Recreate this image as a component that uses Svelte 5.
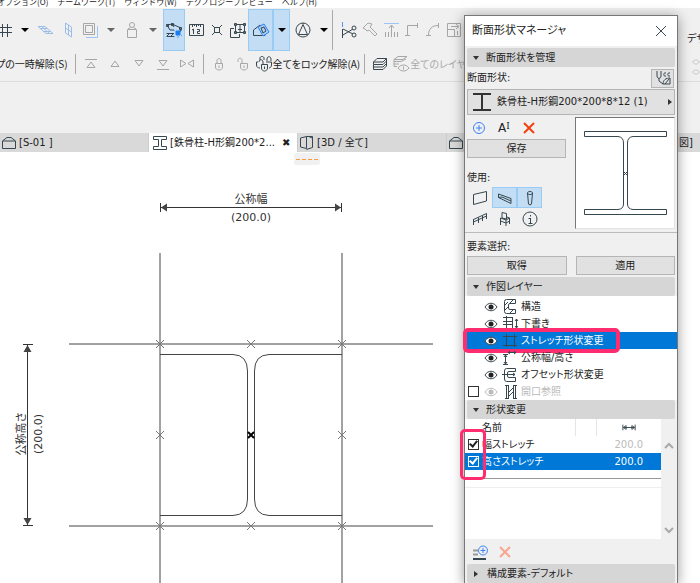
<script lang="ts">
  const menus = ['オプション(O)', 'チームワーク(T)', 'ウィンドウ(W)', 'テクノロジープレビュー', 'ヘルプ(H)'];

  // all toolbar glyphs are drawn on an 18x18 grid
  const icons: Record<string, string> = {
    grid: 'M5.5 3V16M10.5 3V16M0 6.5H15M0 11.5H15',
    slab: 'M1 5.5H8L16 12.5H9ZM4.5 5.5L12.5 12.5M3 7.5H10.500M6 10.500H13',
    wall: 'M6.500 2L12.500 6V16L6.500 12ZM6.500 7L12.500 11M9.500 4V14',
    box: 'M2.5 2.5H13.5V13.5H2.5ZM4.500 4.500H11.500V11.500H4.500Z',
    weight: 'M4.500 8.500H13.500V16.500H4.500ZM5 8L7.5 6.5M13 8L10.5 6.5M9 1.5A2.5 2.5 0 1 1 9 6.5A2.5 2.5 0 1 1 9 1.5',
    ruler: 'M2.500 3.500H16.500V14.500H2.500ZM5.500 3V6M7.5 3V5M9.500 3V6M11.500 3V5M13.500 3V6M6.500 8V13M5 9L6.500 8M10 8.5H12.500V10.5H10.500V12.500H13',
    cross: 'M4 4L7 7M11 11L14 14M14 4L11 7M7 11L4 14M6.500 6.500H11.500V11.500H6.500Z',
    nodes: 'M5 7.500H1.500V16.500H10.500V13M6.500 3.500H15.500V11.500H6.500ZM5.500 2.500H7.500V4.500H5.500ZM14.500 2.500H16.500V4.500H14.500ZM5.500 10.500H7.500V12.500H5.500ZM14.500 10.500H16.500V12.500H14.500ZM11 4V11M9 8.500H13',
    compass: 'M9 2A7 7 0 1 1 9 16A7 7 0 1 1 9 2M9 3.500L13.500 13.500H4.500ZM9 3V2',
    hammer: 'M2 7L7 2L11 3L9 6L16 13L14 15L8 9L6 10L4 8Z',
    raise: 'M9.500 16V5M7 7L9.500 4L12 7M3.500 16V11M6.500 16V11M12.500 16V11M15.500 16V11',
    corner: 'M4.500 15V4.500H14M2 14.500H7M14.500 2V7',
    arc: 'M4.500 14C4.500 8 8 4.500 14 4.500M2 14.500H7M14.500 2V7',
    resize: 'M2.5 2.5H15.5V15.5H2.5ZM3 8.500H9.500V15M6 5.500H13M11 3L14 5.500L11 8M12.500 10V14',
    toTop: 'M3 4.500H15M5 12.500L9 7L13 12.500Z',
    up: 'M5 11.500L9 6L13 11.500Z',
    down: 'M5 5.500L9 11L13 5.500Z',
    toBottom: 'M5 5.500L9 11L13 5.500ZM3 14.500H15',
    mirror: 'M2.500 5V12L8 8.500ZM15.500 5V12L10 8.500Z',
    lock: 'M5.500 8.500H12.500V12C12.500 16 5.500 16 5.500 12ZM7 8V5.500C7 3 11 3 11 5.500V8M9 10.500V13',
    unlock: 'M6.500 8.500H13.500V12C13.500 16 6.500 16 6.500 12ZM8 8V5.500C8 2.500 4 2.500 4 5.500V7M10 10.500V13',
    unlockAll: 'M6.500 9.500H12.500V13C12.500 17 6.500 17 6.500 13ZM8 9V7C8 4 4 4 4 7M3 7H1.500V10C1.500 12 3 13 5 13M5 5V3C5 1 9 1 9 3V5M11 7H16.500V10C16.500 12 15 13 14 13M12 6V4C12 1 16 1 16 4V6M9.500 11.500V14',
    layers: 'M6 3.500H15.500L12 7H2.500ZM2.500 7V9.500H12L15.500 6M2.500 9.500V12H12L15.500 8.500M2.500 12V14.500H12L15.500 11V3.500',
    layersEye: 'M6 1.500H15L11 4.500H2ZM2 4.500V6.500H9L14 4M2 6.500V9H7M2 9V11.500H5M6 13C9 9 14 9 17 13C14 17 9 17 6 13ZM11.500 11.500V14.500',
    building: 'M2.500 7V14.500H15.500V7ZM2.500 7L7 3.500H11L15.500 7',
    profile: 'M2.500 2.500H15.500V5.500H10.500V12.500H15.500V15.500H2.500V12.500H7.500V5.500H2.500Z',
    view3d: 'M2.500 4L8.500 2.500V14.500L2.500 13ZM8.500 2.500H14.500V13.500L8.500 15.500M11 2.500L14 4',
    wallUse: 'M2.500 5.500L15.500 2.500V12L2.500 15.500Z',
    beamUse: 'M2.500 5V8.500L15 14.500V9.500ZM2.500 8.500L6 8L15 12',
    columnUse: 'M6.500 4C6.500 2 11.500 2 11.500 4L10.500 15C10.500 16 7.500 16 7.500 15ZM6.500 4C6.500 6 11.500 6 11.500 4',
    railing: 'M2.500 9.500L15.500 3.500M2.500 12L15.500 6M2.500 9V15M7.500 7.500V13M11.500 6V11M15.500 3.500V9',
    object: 'M6 2.500L10.500 3.500V9L6 8ZM4.500 8L10 10L13.500 8L11 7M4.500 8V11L10 13L13.500 11V8M10 10V16M4.500 11V15M13.500 11V14',
    info: 'M9 2A7 7 0 1 1 9 16A7 7 0 1 1 9 2M9.500 8V13M7.500 8.500H9M7.500 13.500H11.500M9.500 5V6.500',
    eye: 'M3 9C6 4 12 4 15 9C12 14 6 14 3 9Z',
    structure: 'M3.500 3.500Q3.500 1.500 5.500 1.500H14.500V5.500H9Q7.500 5.500 7.500 7V10Q7.500 11.500 9 11.500H14.500V15.500H5.500Q3.500 15.500 3.500 13.500ZM4 7L7 4M4 12L7 9M9 5L12 2M9 15L12 12',
    draft: 'M5.500 1V16M2 2.500H12M2 6.500H12M2 9.500H12M2 13.500H12M15.500 4V13M14 6L15.500 4L17 6M14 11L15.500 13L17 11M11.500 2V14',
    stretch: 'M5.500 2V15M13.500 2V15M2 4.500H16M2 13.500H16',
    nominal: 'M4.500 6V15M3 8L4.500 6L6 8M3 13L4.500 15L6 13M2 5.500H7M2 15.500H7M7 3.500H15M9 2L7 3.500L9 5M13 2L15 3.500L13 5',
    offset: 'M5.500 2.500H14.500V5.500H8Q6.500 5.500 6.500 7V10Q6.500 11.500 8 11.500H14.500V15.500H5.500Q3.500 15.500 3.500 13V5Q3.500 2.500 5.500 2.500M1 8.500H14M12 7L14 8.500L12 10',
    opening: 'M5.500 2V16M7.500 2V16M12.500 2V16M14.500 2V16M8 9L12 5M8 13L12 9M4 2.500H8M12 2.500H16M4 15.500H8M12 15.500H16',
    add: 'M9 3.500A5.500 5.500 0 1 1 9 14.500A5.500 5.500 0 1 1 9 3.500M9 6V12M6 9H12',
    close: 'M4 4L14 14M14 4L4 14',
    width: 'M2.500 6V12M15.500 6V12M3 9H15M6 7L3 9L6 11ZM12 7L15 9L12 11Z',
    scrollUp: 'M5 11L9 7L13 11',
    scrollDown: 'M5 7L9 11L13 7'
  };

  const orderTools = ['toTop', 'up', 'down', 'toBottom', 'mirror'];
  const editTools = ['corner', 'arc', 'resize'];

  const layers = [
    { name: '構造', icon: 'structure' },
    { name: '下書き', icon: 'draft' },
    { name: 'ストレッチ形状変更', icon: 'stretch' },
    { name: '公称幅/高さ', icon: 'nominal' },
    { name: 'オフセット形状変更', icon: 'offset' },
    { name: '開口参照', icon: 'opening', off: true }
  ];

  let selectedLayer = $state(2);
  let selectedRow = $state(1);
  let modifiers = $state([
    { name: '幅ストレッチ', value: '200.0', checked: true },
    { name: '高さストレッチ', value: '200.0', checked: true }
  ]);

  const nodes = [
    [160, 192], [251, 192], [342, 192],
    [160, 283], [342, 283],
    [160, 374], [251, 374], [342, 374]
  ];
</script>

{#snippet icon(name: string)}
  <svg class="icon" viewBox="0 0 18 18" aria-hidden="true"><path d={icons[name]} /></svg>
{/snippet}

{#snippet tool(name: string, cls = '')}
  <button class="tool {cls}" aria-label={name}>{@render icon(name)}</button>
{/snippet}

{#snippet caret(cls = '')}
  <button class="caret {cls}" aria-label="menu"><i></i></button>
{/snippet}

{#snippet section(title: string, open = true)}
  <button class="section" aria-expanded={open}><i class:open></i>{title}</button>
{/snippet}

<div class="app">
  <nav class="menubar">
    {#each menus as m}
      <button>{m}</button>
    {/each}
  </nav>

  <header class="toolbars">
    <div class="bar main">
      {@render tool('grid', 'first')}
      {@render caret()}
      {@render tool('slab', 'wide blue')}
      {@render tool('wall', 'wide blue')}
      <button class="tool wide dim" aria-label="box">
        <svg class="icon" viewBox="0 0 18 18">
          <path d="M16.500 5V16.500H5" stroke="#9dc3f7" />
          <path d={icons.box} />
        </svg>
      </button>
      {@render caret('dim')}
      {@render tool('weight', 'wide dim')}
      {@render caret('dim')}
      <button class="tool wide active" aria-label="trace">
        <svg class="icon" viewBox="0 0 18 18">
          <path d="M2 4L7 3L16 7M2 4L5 9H9M7 3L9 6M16 7L15 11M1.500 12.500H9M1.500 15.500H9M2 15L5 12M6 15L9 12M1.500 3.500H3.500V5.500H1.500ZM6.500 2.500H8.500V4.500H6.500ZM14.500 6.500H16.500V8.500H14.500Z" />
          <path d="M11 10H15V14H11Z" fill="#1c7cf2" stroke="#1c7cf2" />
          <path d="M9 9L10 10M17 9L16 10M17 15L16 14M9 16L10 15M13 17V15" stroke="#5aa2f8" />
        </svg>
      </button>
      {@render tool('ruler')}
      {@render tool('cross')}
      {@render tool('nodes')}
      <button class="tool shape active" aria-label="plane">
        <svg class="icon" viewBox="0 0 18 18">
          <path d="M1.500 14.500V9L8 4L13 9V14.500Z" />
          <path d="M6 6L12 3L17 11L11 15Z" stroke="#2f80ed" fill="#a9cffa" />
          <path d="M9 7L12 6L14 10L11 12Z" />
        </svg>
      </button>
      {@render caret('active')}
      {@render tool('compass', 'round')}
      {@render caret()}
      <span class="rule"></span>
      <button class="tool" aria-label="cut">
        <svg class="icon" viewBox="0 0 18 18">
          <path d="M2.500 1V6" stroke="#4d97f5" />
          <path d="M2.500 8V17M3 8L13 13M3 14L13 8M14 5A2 2 0 1 1 14 9A2 2 0 1 1 14 5M14 12A2 2 0 1 1 14 16A2 2 0 1 1 14 12" />
        </svg>
      </button>
      {@render tool('hammer', 'dim')}
      <button class="tool dim" aria-label="raise">
        <svg class="icon" viewBox="0 0 18 18">
          <path d="M2 2.500H17" stroke="#9dc3f7" />
          <path d={icons.raise} />
        </svg>
      </button>
      {#each editTools as t}
        {@render tool(t, 'dim')}
      {/each}
      <span class="side">デザ</span>
    </div>

    <div class="bar second">
      <button class="text release">プの一時解除(S)</button>
      <span class="rule"></span>
      {#each orderTools as t}
        {@render tool(t, 'dim')}
      {/each}
      <span class="rule"></span>
      {@render tool('lock', 'dim')}
      {@render tool('unlock', 'dim')}
      <button class="text">{@render icon('unlockAll')}全てをロック解除(A)</button>
      <span class="rule"></span>
      {@render tool('layers')}
      <button class="text dim">{@render icon('layersEye')}全てのレイヤー</button>
      <span class="side dim">{@render icon('eye')}{@render icon('eye')}</span>
    </div>
  </header>

  <div class="tabs">
    <button class="tab">{@render icon('building')}[S-01 ]</button>
    <button class="tab current">{@render icon('profile')}[鉄骨柱-H形鋼200*2...<b>✖</b></button>
    <button class="tab">{@render icon('view3d')}[3D / 全て]</button>
    <button class="tab rest">{@render icon('building')}<span>図]</span></button>
  </div>

  <main class="canvas">
    <div class="handle"><i></i></div>
    <svg class="drawing" width="464" height="431" viewBox="0 0 464 431">
      <path class="guides" d="M160 101V431M342 101V431M69 192H433M69 374H433" />
      <path class="outline" d="M160 202.500H233Q247.500 203 247.500 219V347Q247.500 363 233 363.500H160M342 202.500H269Q254.500 203 254.500 219V347Q254.500 363 269 363.500H342" />
      {#each nodes as [x, y]}
        <path class="node" d="M{x - 4} {y - 4}l8 8m0 -8l-8 8" />
      {/each}
      <path class="origin" d="M248 280l6 6m0 -6l-6 6" />
      <path class="dim-line" d="M160 55.500H342M160.500 51V60M341.500 51V60M27.500 192V374M23 192.500H33M23 373.500H33" />
      <path class="head" d="M161 55.500l6 -4v8ZM341 55.500l-6 -4v8ZM27.500 193l-4 7h8ZM27.500 373l-4 -7h8Z" />
      <text x="251" y="51">公称幅</text>
      <text x="251" y="69">(200.0)</text>
      <text transform="translate(25 282) rotate(-90)">公称高さ</text>
      <text transform="translate(42 282) rotate(-90)">(200.0)</text>
    </svg>
  </main>

  <aside class="panel">
    <div class="title">
      <h1>断面形状マネージャ</h1>
      <button aria-label="閉じる"><svg width="12" height="12" viewBox="0 0 12 12"><path d="M1 1L11 11M11 1L1 11" /></svg></button>
    </div>

    {@render section('断面形状を管理')}
    <div class="label-row">
      <span>断面形状:</span>
      <button class="push square" aria-label="選択">
        <svg class="icon" viewBox="0 0 18 18">
          <path d="M3 2V7C3 10 7 10 7 7V2M5 9V12L9 15M12 4C9 3 9 8 12 7M16 4C13 3 13 8 16 7M9 15C9 11 12 9 16 9V15ZM11 15L15 10" />
        </svg>
      </button>
    </div>
    <button class="push picker">
      <svg width="20" height="20" viewBox="0 0 20 20"><path d="M1 2H19M1 18H19M10 2V18" /></svg>
      <span>鉄骨柱-H形鋼200*200*8*12 (1)</span>
      <i></i>
    </button>

    <div class="manage">
      <div class="controls">
        <div class="actions">
          <button class="new" aria-label="新規">{@render icon('add')}</button>
          <button class="rename" aria-label="名前変更">A<sup>I</sup></button>
          <button class="delete" aria-label="削除">{@render icon('close')}</button>
        </div>
        <button class="push">保存</button>
        <span class="use">使用:</span>
        <div class="uses">
          {@render tool('wallUse')}
          {@render tool('beamUse', 'active')}
          {@render tool('columnUse', 'active')}
          {@render tool('railing')}
          {@render tool('object')}
          {@render tool('info')}
        </div>
      </div>
      <svg class="preview" viewBox="0 0 98 110">
        <path d="M8.500 13.500H90.500V18.500H57Q51.500 19 51.500 25V86Q51.500 91 57 91.500H90.500V96.500H8.500V91.500H42Q47.500 91 47.500 86V25Q47.500 19 42 18.500H8.500Z" />
        <path d="M48 54l3 3m0 -3l-3 3" />
      </svg>
    </div>

    <div class="elements">
      <span>要素選択:</span>
      <div class="pair">
        <button class="push">取得</button>
        <button class="push">適用</button>
      </div>
    </div>

    {@render section('作図レイヤー')}
    <ul class="layers">
      {#each layers as layer, i}
        <li class:selected={i === selectedLayer} class:off={layer.off}>
          <span class="tick">
            {#if layer.off}<input type="checkbox" aria-label={layer.name} />{/if}
          </span>
          <button class="row" onclick={() => (selectedLayer = i)}>
            <svg class="icon eye" viewBox="0 0 18 18">
              <path class="lid" d={icons.eye} />
              <circle cx="9" cy="9" r="2.500" />
            </svg>
            {@render icon(layer.icon)}
            <span>{layer.name}</span>
          </button>
          {#if i === selectedLayer}<div class="mark"></div>{/if}
        </li>
      {/each}
    </ul>

    {@render section('形状変更')}
    <div class="modifiers">
      <div class="table-area">
        <table>
          <thead>
            <tr>
              <th class="check"></th>
              <th class="name">名前</th>
              <th class="gap"></th>
              <th class="value">{@render icon('width')}</th>
            </tr>
          </thead>
          <tbody>
            {#each modifiers as mod, i}
              <tr class:selected={i === selectedRow} onclick={() => (selectedRow = i)}>
                <td class="check"><input type="checkbox" aria-label={mod.name} bind:checked={mod.checked} /></td>
                <td class="name">{mod.name}</td>
                <td class="gap"></td>
                <td class="value">{mod.value}</td>
              </tr>
            {/each}
          </tbody>
        </table>
        <div class="end"></div>
        <div class="mark tall"></div>
      </div>
      <div class="scroll">
        <button aria-label="上へ">{@render icon('scrollUp')}</button>
        <button aria-label="下へ">{@render icon('scrollDown')}</button>
      </div>
    </div>
    <div class="foot">
      <button aria-label="追加">
        <svg class="icon" viewBox="0 0 18 18">
          <path d="M2 7.500H7M2 11.500H7" stroke="#999" stroke-width="2" />
          <path d="M2 16H15" stroke-width="2" />
          <path d="M12 3A4.500 4.500 0 1 1 12 12A4.500 4.500 0 1 1 12 3M12 5V10M9.500 7.500H14.500" stroke="#3b82f6" />
        </svg>
      </button>
      <button class="remove" aria-label="削除">{@render icon('close')}</button>
    </div>
    {@render section('構成要素-デフォルト', false)}
  </aside>
</div>

<style>
  :global(body) {
    margin: 0;
  }

  .app {
    position: relative;
    display: flex;
    flex-direction: column;
    height: 100vh;
    overflow: hidden;
    background: #fff;
    color: #222;
    font: 10px/16px "DejaVu Sans", "Noto Sans CJK JP", sans-serif;
    font-feature-settings: "palt";
  }

  button {
    display: flex;
    align-items: center;
    justify-content: center;
    padding: 0;
    border: 0;
    background: none;
    color: inherit;
    font: inherit;
    font-feature-settings: inherit;
    white-space: nowrap;
  }

  svg {
    fill: none;
    stroke: #37474f;
    stroke-width: 1;
  }

  .icon {
    flex: none;
    width: 18px;
    height: 18px;
  }

  .menubar {
    display: flex;
    align-items: flex-end;
    gap: 9px;
    height: 8px;
    margin-left: -3px;
    font: 8px/12px "Noto Sans CJK JP", sans-serif;
  }

  .menubar button {
    flex: none;
  }

  .toolbars {
    height: 125px;
    background: #f0f0f0;
  }

  .bar {
    display: flex;
    align-items: center;
  }

  .main {
    height: 43px;
  }

  .second {
    height: 26px;
    padding-bottom: 4px;
    border-bottom: 1px solid #dcdcdc;
    font-family: "Noto Sans CJK JP", sans-serif;
  }

  .tool {
    flex: none;
    width: 21px;
    height: 42px;
  }

  .tool.first {
    width: 15px;
    justify-content: flex-end;
  }

  .tool.wide {
    width: 22px;
  }

  .tool.shape,
  .tool.round {
    width: 25px;
  }

  .active {
    background: #c2ddf4;
    box-shadow: inset 0 0 0 1px #99ccf5;
  }

  .blue svg {
    stroke: #9dbde8;
  }

  .dim {
    color: #aaa;
  }

  .dim svg {
    stroke: #a6a6a6;
  }

  .caret {
    flex: none;
    width: 20px;
    height: 42px;
  }

  .caret.active,
  .round + .caret {
    width: 17px;
  }

  .caret i {
    border: 4px solid transparent;
    border-top-color: #000;
    border-bottom: 0;
  }

  .caret.dim i {
    border-top-color: #666;
  }

  .rule {
    flex: none;
    width: 1px;
    height: 40px;
    margin-right: 5px;
    background: #aaa;
  }

  .second .rule {
    height: 20px;
    margin: 0 3px 0 4px;
  }

  .second .tool {
    width: 24px;
    height: 26px;
  }

  .text {
    flex: none;
  }

  .text.release {
    margin-left: -4px;
    padding-right: 3px;
  }

  .side {
    display: flex;
    flex-direction: column;
    width: 13px;
    margin-left: auto;
    padding-top: 18px;
    overflow: hidden;
    white-space: nowrap;
  }

  .second .side {
    padding-top: 6px;
  }

  .side svg {
    height: 10px;
  }

  .tabs {
    display: flex;
    height: 19px;
    background: #d9d9d9;
  }

  .tab {
    flex: 0 1 149px;
    justify-content: flex-start;
    gap: 1px;
    border-right: 1px solid #ccc;
    overflow: hidden;
  }

  .tab.current {
    background: #fff;
    padding-left: 2px;
  }

  .tab b {
    margin-left: 6px;
  }

  .tab.rest {
    flex: 1;
    justify-content: space-between;
    padding-right: 7px;
    border: 0;
  }

  .canvas {
    position: relative;
    flex: 1;
    min-height: 0;
    overflow: hidden;
  }

  .handle {
    position: absolute;
    top: 1px;
    left: 294px;
    padding: 6px 2px 5px;
    border-radius: 2px;
    background: #f1f1f1;
  }

  .handle i {
    display: block;
    width: 22px;
    height: 1px;
    background: repeating-linear-gradient(90deg, #f59a45 0 4px, transparent 4px 6px);
  }

  .drawing {
    display: block;
  }

  .guides,
  .outline {
    stroke: #444;
  }

  .node {
    stroke: #777;
  }

  .origin {
    stroke: #000;
    stroke-width: 2;
  }

  .dim-line {
    stroke: #333;
  }

  .head {
    fill: #444;
    stroke: none;
  }

  .drawing text {
    fill: #333;
    stroke: none;
    font-size: 11px;
    text-anchor: middle;
  }

  .panel {
    position: absolute;
    top: 15px;
    right: 22px;
    bottom: 0;
    display: flex;
    flex-direction: column;
    box-sizing: border-box;
    width: 214px;
    border: 1px solid #777;
    border-bottom: 0;
    background: #f0f0f0;
    box-shadow: 0 2px 12px rgba(0, 0, 0, 0.4);
  }

  .title {
    display: flex;
    align-items: center;
    justify-content: space-between;
    height: 30px;
    margin-bottom: 2px;
    padding: 0 10px 0 7px;
    background: #fff;
  }

  .title h1 {
    margin: 0;
    font-size: 11px;
    font-weight: 400;
  }

  .section {
    flex: none;
    justify-content: flex-start;
    height: 19px;
    margin: 0 2px;
    border-radius: 2px;
    background: #d6d6d6;
  }

  .section i {
    width: 0;
    margin: 0 9px 0 7px;
    border: 3px solid transparent;
    border-left: 4px solid #333;
    border-right: 0;
  }

  .section i.open {
    margin: 0 7px 0 6px;
    border: 3px solid transparent;
    border-top: 4px solid #333;
    border-bottom: 0;
  }

  .label-row {
    display: flex;
    align-items: center;
    justify-content: space-between;
    height: 22px;
    padding: 0 3px 0 2px;
  }

  .push {
    height: 19px;
    border: 1px solid #b5b5b5;
    background: #e1e1e1;
  }

  .square {
    width: 23px;
  }

  .picker {
    flex: none;
    height: 26px;
    gap: 5px;
    margin: 0 2px;
    padding: 0 2px 0 4px;
  }

  .picker svg {
    stroke-width: 2;
    stroke: #333;
  }

  .picker span {
    flex: 1;
    text-align: left;
  }

  .picker i {
    border: 3px solid transparent;
    border-left: 4px solid #333;
    border-right: 0;
  }

  .manage {
    display: flex;
    gap: 9px;
    padding: 2px 2px 3px;
    border-bottom: 1px solid #bbb;
  }

  .controls {
    display: flex;
    flex: 1;
    flex-direction: column;
  }

  .actions {
    display: flex;
    gap: 6px;
    height: 22px;
    padding-left: 3px;
  }

  .new svg {
    stroke: #3b82f6;
  }

  .rename {
    width: 20px;
    font-size: 12px;
  }

  .rename sup {
    font: 9px/9px "DejaVu Serif", serif;
    margin-bottom: 4px;
  }

  .delete svg {
    stroke: #f4400f;
    stroke-width: 2;
  }

  .use {
    padding: 12px 0 1px;
  }

  .uses {
    display: grid;
    grid-template-columns: repeat(3, 25px);
    grid-auto-rows: 21px;
  }

  .uses .tool {
    width: 25px;
    height: 21px;
  }

  .preview {
    width: 98px;
    height: 110px;
    border: 1px solid #e3e3e3;
    border-top-color: #777;
    border-left-color: #777;
    background: #fff;
  }

  .elements {
    display: flex;
    flex-direction: column;
    gap: 1px;
    padding: 6px 2px 2px;
  }

  .pair {
    display: flex;
    gap: 9px;
  }

  .pair .push {
    flex: 1;
  }

  .layers {
    margin: 0;
    padding: 2px 0 0;
    background: #fff;
    list-style: none;
  }

  .layers li {
    position: relative;
    display: flex;
    height: 17px;
  }

  .tick {
    display: flex;
    align-items: center;
    width: 17px;
    padding-left: 3px;
    box-sizing: border-box;
  }

  .row {
    flex: 1;
    justify-content: flex-start;
  }

  .row span {
    margin-left: 2px;
  }

  .eye {
    margin-right: 1px;
  }

  .eye circle {
    fill: #222;
    stroke: none;
  }

  .off .row {
    color: #bbb;
  }

  .off .eye {
    stroke: #bbb;
  }

  .off .eye circle {
    fill: #bbb;
  }

  .selected {
    background: #0078d7;
    color: #fff;
  }

  .selected .lid {
    fill: #fff;
  }

  .mark {
    position: absolute;
    top: -4px;
    left: -2px;
    box-sizing: border-box;
    width: 157px;
    height: 25px;
    border: 4px solid #ff2d6f;
    border-radius: 5px;
    pointer-events: none;
  }

  .mark.tall {
    top: 10px;
    left: -5px;
    width: 26px;
    height: 51px;
    border-width: 3px;
  }

  input[type='checkbox'] {
    display: block;
    flex: none;
    box-sizing: border-box;
    width: 11px;
    height: 11px;
    margin: 0;
    border: 1px solid #333;
    background: #fff;
    appearance: none;
  }

  input:checked::after {
    content: '';
    display: block;
    box-sizing: border-box;
    width: 5px;
    height: 8px;
    margin: -1px auto 0;
    border: solid #222;
    border-width: 0 2px 2px 0;
    transform: rotate(40deg);
  }

  .selected input {
    border-color: #fff;
    background: #0078d7;
  }

  .selected input::after {
    border-color: #fff;
  }

  .modifiers {
    display: flex;
    flex: 1;
    min-height: 0;
    background: #fff;
  }

  .table-area {
    position: relative;
    flex: 1;
  }

  table {
    width: 100%;
    border-collapse: collapse;
    table-layout: fixed;
  }

  th,
  td {
    height: 17px;
    padding: 0;
    font-weight: 400;
    line-height: 17px;
    text-align: left;
    white-space: nowrap;
  }

  th.gap,
  th.value {
    border-left: 1px solid #e5e5e5;
  }

  .check {
    width: 17px;
  }

  .check input {
    margin-left: 3px;
  }

  .gap {
    width: 20px;
  }

  .value {
    width: 64px;
    text-align: center;
  }

  td.value {
    color: #bbb;
  }

  .selected td.value {
    color: #fff;
  }

  .value svg {
    display: block;
    margin: 0 auto;
    height: 17px;
  }

  .end {
    height: 8px;
    margin-top: 8px;
    border-top: 1px solid #999;
    border-bottom: 1px solid #eee;
  }

  .scroll {
    display: flex;
    flex-direction: column;
    justify-content: space-between;
    width: 16px;
    padding-top: 18px;
    background: #f0f0f0;
  }

  .scroll svg {
    stroke: #aaa;
    stroke-width: 2;
  }

  .foot {
    display: flex;
    gap: 7px;
    height: 25px;
    padding-left: 6px;
  }

  .remove svg {
    stroke: #f9a58f;
    stroke-width: 2;
  }
</style>
